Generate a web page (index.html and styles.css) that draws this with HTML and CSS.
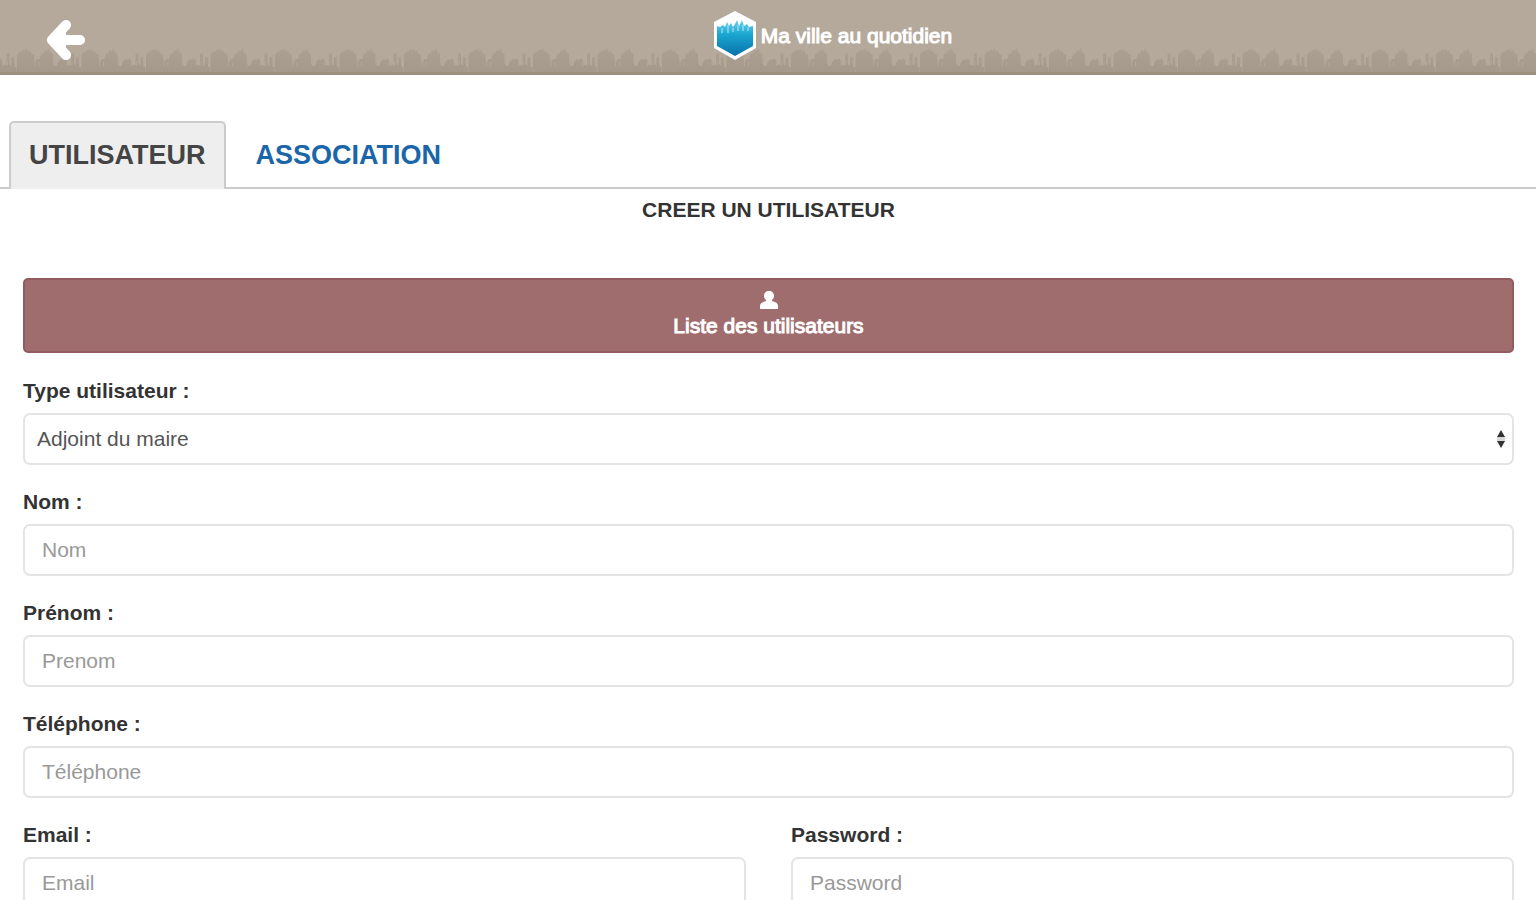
FILE: index.html
```html
<!DOCTYPE html>
<html lang="fr">
<head>
<meta charset="utf-8">
<title>Ma ville au quotidien</title>
<link rel="stylesheet" href="styles.css">
</head>
<body>
<header class="topbar">
  <svg class="skyline" aria-hidden="true">
    <defs>
      <linearGradient id="haze" x1="0" y1="0" x2="0" y2="1">
        <stop offset="0" stop-color="#aca092"/>
        <stop offset="1" stop-color="#a4998a"/>
      </linearGradient>
      <pattern id="city" x="17" y="0" width="129" height="25" patternUnits="userSpaceOnUse">
        <g id="tile">
          <path fill="url(#haze)" d="M0 25V8l2-3 3-1 2-2 1 2 2-3 1 4 2-2 1 3 3 2v4l2 3 1-3h3l1-5 3-1 1-3 2 1 2-3 1 4 3 2v9l2 3h2l1-4 3-3 2 1 2-2 2 3 1 4h3V7l3-1v11l2 2v-9h3v10h2V25Z"/>
          <path fill="none" stroke="#b1a699" d="M18 13v6M22 15v4M37 12v6M50 15v4M55 14v5M62 8v9"/>
        </g>
        <use href="#tile" x="64.5"/>
      </pattern>
    </defs>
    <rect width="100%" height="25" fill="url(#city)"/>
  </svg>
  <button class="back" type="button" aria-label="Retour">
    <svg width="40" height="42" viewBox="0 0 40 42" aria-hidden="true">
      <path d="M20 6 6 21 20 36M8 21H34" fill="none" stroke="#fff" stroke-width="10" stroke-linecap="round" stroke-linejoin="round"/>
      <path d="M5 21 20 7V35Z" fill="#fff"/>
    </svg>
  </button>
  <div class="brand">
    <svg width="44" height="50" viewBox="0 0 44 50" aria-hidden="true">
      <defs>
        <linearGradient id="water" x1="0" y1="0" x2="0" y2="1">
          <stop offset="0" stop-color="#6fd2ee"/>
          <stop offset=".4" stop-color="#1ba6d0"/>
          <stop offset="1" stop-color="#0872aa"/>
        </linearGradient>
      </defs>
      <path d="M22 0 43 11V37L22 49 1 37V11Z" fill="#fff"/>
      <path d="M4 15 7 16 10 14 12 16 14 11 16 15 18 12 20 16 22 13 24 9 26 15 29 9 31 15 34 13 36 16 40 15V35L22 45 4 35Z" fill="url(#water)"/>
      <path d="M9 17v5M15 14v8M20 17v4M25 14v6M30 14v6M35 16v4" stroke="#9be3f4" stroke-opacity=".6" stroke-width="2"/>
    </svg>
    <span>Ma ville au quotidien</span>
  </div>
</header>

<nav class="tabs">
  <a class="tab active" href="#utilisateur" aria-current="page">UTILISATEUR</a>
  <a class="tab" href="#association">ASSOCIATION</a>
</nav>

<main class="content" id="utilisateur">
  <h1>CREER UN UTILISATEUR</h1>
  <button class="list-button" type="button">
    <svg width="18" height="20" viewBox="0 0 18 20" aria-hidden="true">
      <path fill="#fff" d="M9 1c3 0 5 2 5 5 0 2-1 3-2 4v1c3 1 6 2 6 5v3H0v-3c0-3 3-4 6-5v-1C5 9 4 8 4 6c0-3 2-5 5-5Z"/>
    </svg>
    <span>Liste des utilisateurs</span>
  </button>

  <form class="form">
    <div class="field">
      <label for="type">Type utilisateur :</label>
      <div class="select-wrap">
        <select class="control" id="type"><option>Adjoint du maire</option></select>
        <svg class="arrows" width="8" height="18" viewBox="0 0 8 18" aria-hidden="true">
          <path fill="#d8d8d8" d="M0 6h8v6H0z"/>
          <path fill="#333" d="M4 0 8 7H0ZM4 18 0 11H8Z"/>
        </svg>
      </div>
    </div>
    <div class="field">
      <label for="nom">Nom :</label>
      <input class="control" id="nom" type="text" placeholder="Nom">
    </div>
    <div class="field">
      <label for="prenom">Prénom :</label>
      <input class="control" id="prenom" type="text" placeholder="Prenom">
    </div>
    <div class="field">
      <label for="tel">Téléphone :</label>
      <input class="control" id="tel" type="tel" placeholder="Téléphone">
    </div>
    <div class="row">
      <div class="field">
        <label for="email">Email :</label>
        <input class="control" id="email" type="email" placeholder="Email">
      </div>
      <div class="field">
        <label for="password">Password :</label>
        <input class="control" id="password" type="password" placeholder="Password">
      </div>
    </div>
  </form>
</main>
</body>
</html>
```

FILE: styles.css
```css
* {
  box-sizing: border-box;
}

html {
  scrollbar-width: none;
}

body {
  margin: 0;
  background: #fff;
  color: #333;
  font: 21px/30px "Liberation Sans", Arial, sans-serif;
}

button {
  font: inherit;
  cursor: pointer;
}

.topbar {
  position: relative;
  display: grid;
  grid-template-columns: 1fr auto 1fr;
  align-items: center;
  height: 75px;
  padding: 0 22px 0 46px;
  background: #b5a99c;
  border-bottom: 3px solid #9c907f;
}

.skyline {
  position: absolute;
  left: 0;
  bottom: 0;
  width: 100%;
  height: 25px;
}

.back {
  position: relative;
  justify-self: start;
  margin-top: 7px;
  padding: 0;
  border: 0;
  background: none;
}

.back svg,
.brand svg,
.list-button svg {
  display: block;
}

.brand {
  position: relative;
  grid-column: 2;
  display: flex;
  align-items: center;
  gap: 4px;
  margin-left: 105px;
  color: #fff;
  -webkit-text-stroke: 1px #fff;
}

.tabs {
  display: flex;
  gap: 10px;
  margin-top: 46px;
  padding-left: 9px;
  border-bottom: 2px solid #ccc;
}

.tab {
  margin-bottom: -2px;
  padding: 16px 18px 18px;
  border: 2px solid transparent;
  border-bottom: 0;
  border-radius: 5px 5px 0 0;
  color: #1b66a9;
  font-size: 27px;
  font-weight: bold;
  line-height: 32px;
  text-decoration: none;
}

.tab.active {
  border-color: #ccc;
  background: #eee;
  color: #444;
}

.content {
  padding: 0 22px 22px 23px;
}

h1 {
  margin: 0 0 47px;
  font-size: 21px;
  line-height: 42px;
  text-align: center;
}

.list-button {
  display: flex;
  flex-direction: column;
  align-items: center;
  width: 100%;
  height: 75px;
  padding: 10px 0 0;
  border: 2px solid #925b60;
  border-radius: 5px;
  background: #a06d6e;
  color: #fff;
  -webkit-text-stroke: 1px #fff;
}

.list-button span {
  line-height: 32px;
}

.form {
  display: grid;
  gap: 22px;
  margin-top: 23px;
}

.field {
  display: grid;
  gap: 7px;
}

.row {
  display: grid;
  grid-template-columns: 1fr 1fr;
  gap: 45px;
}

label {
  font-weight: bold;
}

.control {
  width: 100%;
  height: 52px;
  padding: 0 17px;
  border: 2px solid #e4e4e4;
  border-radius: 7px;
  background: #fff;
  color: #555;
  font: inherit;
  appearance: none;
}

.control::placeholder {
  color: #999;
  opacity: 1;
}

select.control {
  display: block;
  padding: 0 12px;
}

.select-wrap {
  position: relative;
}

.arrows {
  position: absolute;
  top: 17px;
  right: 9px;
  pointer-events: none;
}
```
